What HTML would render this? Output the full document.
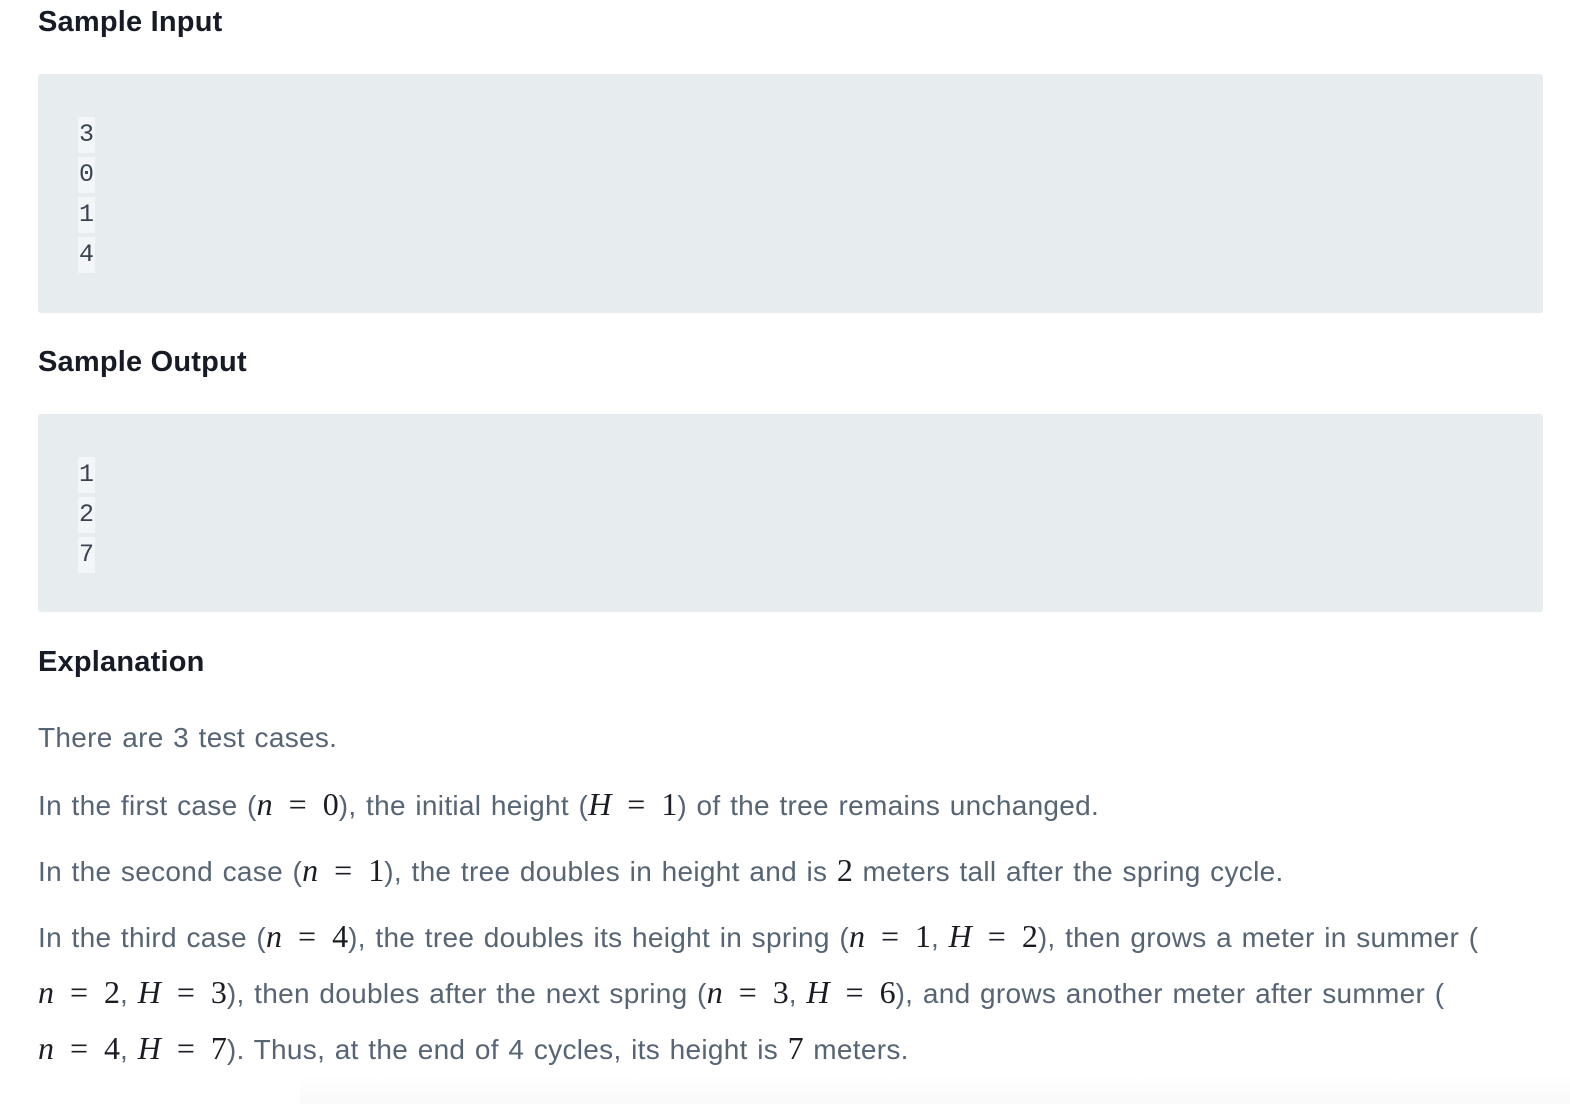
<!DOCTYPE html>
<html><head><meta charset="utf-8"><style>
body{margin:0;width:1570px;height:1104px;background:#fff;position:relative;overflow:hidden;font-family:"Liberation Sans",sans-serif;}
.h{position:absolute;left:38px;font-weight:bold;font-size:29px;color:#161b26;line-height:40px;letter-spacing:0.2px;}
.box{position:absolute;left:38px;width:1505px;background:#e7ecef;border-radius:3px;}
.c{position:absolute;left:78px;width:17px;height:36px;background:#f3f6f8;font-family:"Liberation Mono",monospace;font-size:25px;line-height:36px;color:#3a4350;text-align:center;}
.t{position:absolute;left:38px;font-size:28px;color:#566474;line-height:40px;white-space:nowrap;letter-spacing:0.3px;word-spacing:1.5px;}
.m{font-family:"Liberation Serif",serif;font-size:32px;color:#1a1d23;letter-spacing:0;word-spacing:0;}
.i{font-style:italic;}
.e{margin:0 0.5em;}
.fade{position:absolute;left:300px;top:1076px;width:1270px;height:28px;background:linear-gradient(#fff,#f9f9f9);}
</style></head><body>
<div class="h" style="top:2px">Sample Input</div>
<div class="box" style="top:74px;height:239px"></div>
<div class="c" style="top:117px">3</div>
<div class="c" style="top:157px">0</div>
<div class="c" style="top:197px">1</div>
<div class="c" style="top:237px">4</div>
<div class="h" style="top:342px">Sample Output</div>
<div class="box" style="top:414px;height:198px"></div>
<div class="c" style="top:457px">1</div>
<div class="c" style="top:497px">2</div>
<div class="c" style="top:537px">7</div>
<div class="h" style="top:642px">Explanation</div>
<div class="fade"></div>
<div class="t" style="top:718px">There are 3 test cases.</div>
<div class="t" style="top:784px">In the first case (<span class="m"><span class="i">n</span><span class="e">=</span>0</span>), the initial height (<span class="m"><span class="i">H</span><span class="e">=</span>1</span>) of the tree remains unchanged.</div>
<div class="t" style="top:850px">In the second case (<span class="m"><span class="i">n</span><span class="e">=</span>1</span>), the tree doubles in height and is <span class="m">2</span> meters tall after the spring cycle.</div>
<div class="t" style="top:916px">In the third case (<span class="m"><span class="i">n</span><span class="e">=</span>4</span>), the tree doubles its height in spring (<span class="m"><span class="i">n</span><span class="e">=</span>1</span>, <span class="m"><span class="i">H</span><span class="e">=</span>2</span>), then grows a meter in summer (</div>
<div class="t" style="top:972px"><span class="m"><span class="i">n</span><span class="e">=</span>2</span>, <span class="m"><span class="i">H</span><span class="e">=</span>3</span>), then doubles after the next spring (<span class="m"><span class="i">n</span><span class="e">=</span>3</span>, <span class="m"><span class="i">H</span><span class="e">=</span>6</span>), and grows another meter after summer (</div>
<div class="t" style="top:1028px"><span class="m"><span class="i">n</span><span class="e">=</span>4</span>, <span class="m"><span class="i">H</span><span class="e">=</span>7</span>). Thus, at the end of 4 cycles, its height is <span class="m">7</span> meters.</div>
</body></html>
